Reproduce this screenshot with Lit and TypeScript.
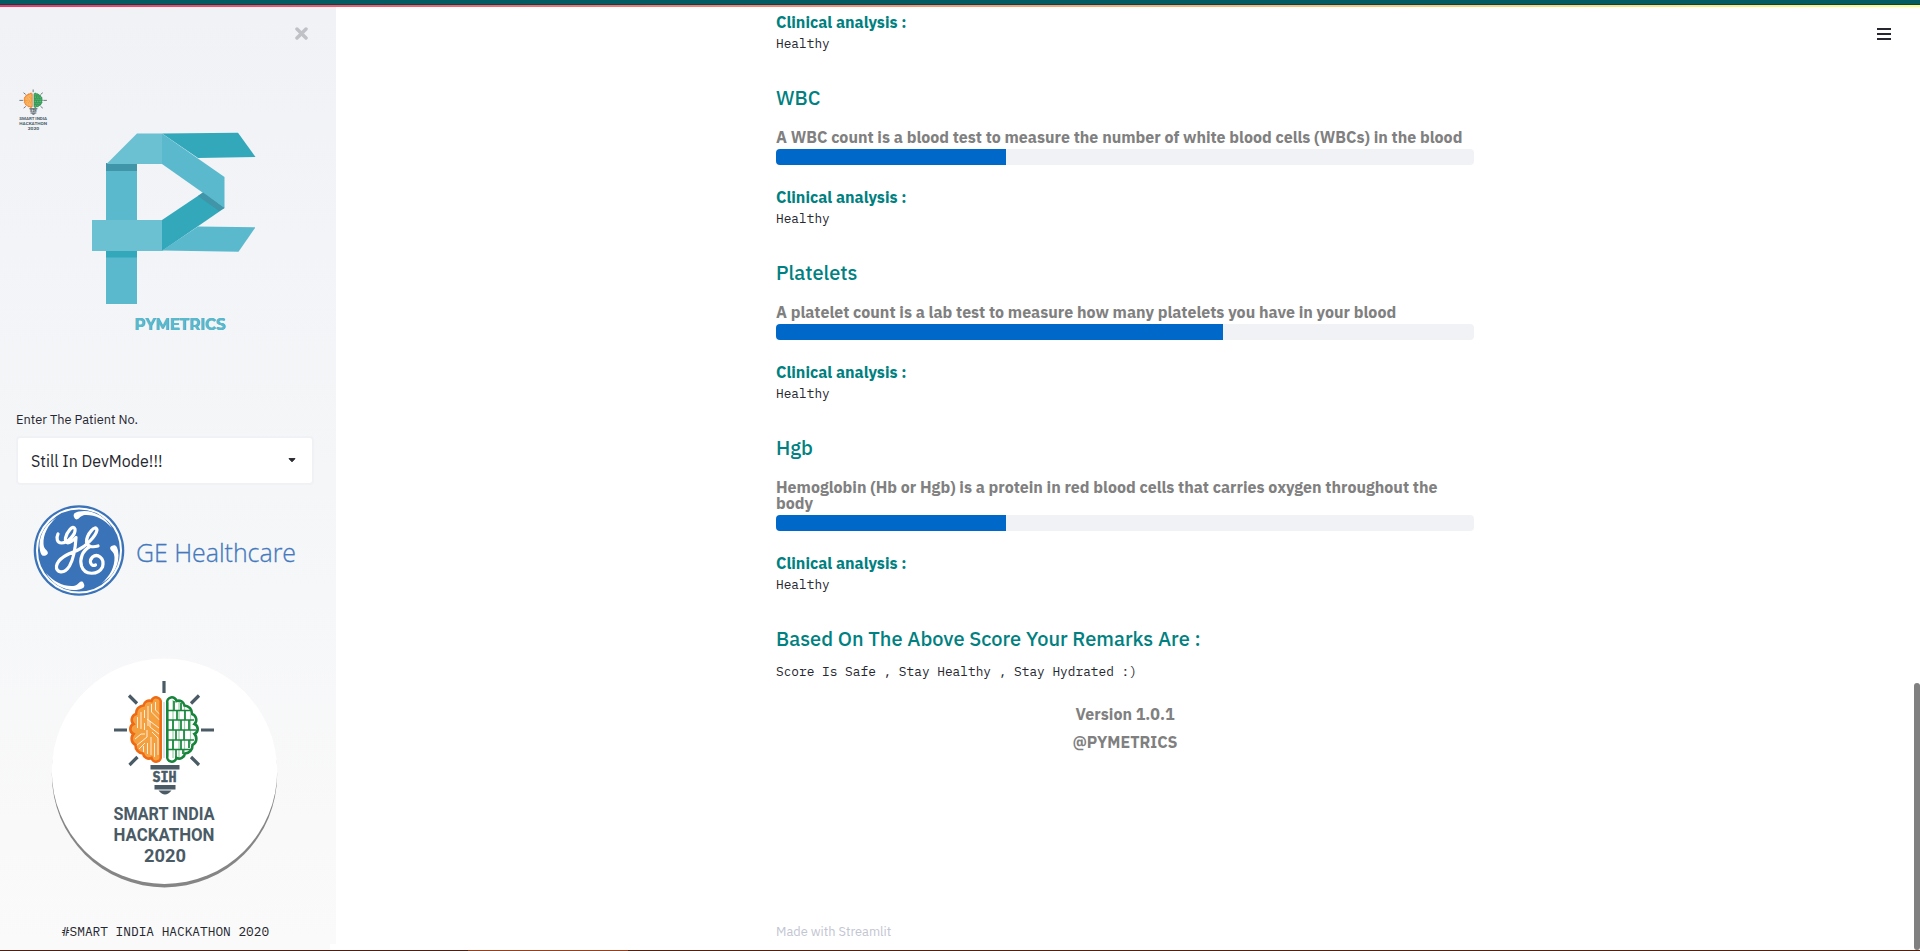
import { LitElement, html, svg, css } from "lit";
import { customElement } from "lit/decorators.js";

interface Metric { name: string; about: string; score: number; }

const METRICS: Metric[] = [
  { name: "WBC", about: "A WBC count is a blood test to measure the number of white blood cells (WBCs) in the blood", score: 33 },
  { name: "Platelets", about: "A platelet count is a lab test to measure how many platelets you have in your blood", score: 64 },
  { name: "Hgb", about: "Hemoglobin (Hb or Hgb) is a protein in red blood cells that carries oxygen throughout the body", score: 33 },
];

const LEFT_LOBE = "M130.700 63A4.700 4.700 0 0 0 121.500 61A6 6 0 0 0 113.500 65.500A8 8 0 0 0 106 74A6 6 0 0 0 103.500 84A5.500 5.500 0 0 0 103.500 94A7 7 0 0 0 105.500 105A8 8 0 0 0 113 113.500A6 6 0 0 0 121.500 118A4.700 4.700 0 0 0 130.700 116Z";
const RIGHT_LOBE = "M137.300 63A4.700 4.700 0 0 1 146.500 61A6 6 0 0 1 154.500 65.500A8 8 0 0 1 162 74A6 6 0 0 1 164.500 84A5.500 5.500 0 0 1 164.500 94A7 7 0 0 1 162.500 105A8 8 0 0 1 155 113.500A6 6 0 0 1 146.500 118A4.700 4.700 0 0 1 137.300 116Z";

/** Light bulb with a two-sided brain, rays, cap and caption. */
const bulb = (leafFill = "#fff") => svg`
  <path d="M134 41v12M99 55.500l8 8M169 55.500l-8 8M84 90h13M171 90h13M99.500 125l8 -8M169 125l-8 -8" fill="none" stroke="#4a5b66" stroke-width="3.200"/>
  <path d="M134 62v56" stroke="#d5dadd" stroke-width="1.500"/>
  <path d=${LEFT_LOBE} fill="#f5a03f"/>
  <path d="M107.500 77v11M111 72v17M114.500 70v8M118 66v20M121.500 64v8l8 8M125.500 62v8l5 5M129 88l-12 -9M129 94l-9 -7v-6M117 90v7l-11 9M122 92l6 6v17M124.500 103v14M121 97v18M117.500 103v11M113.500 106v7M114.500 83v7M105 99l6 -5h4M109 109l6 -6" stroke="#fff" stroke-width=".9" fill="none" opacity=".9"/>
  <path d=${LEFT_LOBE} fill="none" stroke="#ee6a14" stroke-width="2.600"/>
  <path d=${RIGHT_LOBE} fill=${leafFill}/>
  <path d="M143 60V118M149 62V117M154.500 66V112M160.500 75V104" fill="none" stroke="#9ccfa9" stroke-width="1.200"/>
  <path d="M137 70.500H161M137 80H164M137 90H166M137 100H164M137 109.500H161M144 61V70M151 63V70M147 70V80M155 70V80M143 80V90M151 80V90M159 80V90M146 90V100M154 90V100M143 100V110M151 100V110M159 100V108M146 110V118M153 110V114" fill="none" stroke="#16853b" stroke-width="1.700"/>
  <path d=${RIGHT_LOBE} fill="none" stroke="#16853b" stroke-width="2.600"/>
  <path d="M120.500 125h29v4.500h-29zM124.500 145h21v4.500h-21zM128.500 150.500h13q-6.500 8 -13 0z" fill="#4a5b66"/>
  <text x="122.500" y="142" font-size="15" font-weight="700" font-family="'IBM Plex Mono', 'Liberation Mono', monospace" fill="#4a5b66" stroke="#4a5b66" stroke-width=".5" textLength="24" lengthAdjust="spacingAndGlyphs">SIH</text>
  <g fill="#4a5b66" font-family="Roboto, sans-serif" font-weight="700" font-size="18.600">
    <text x="83.500" y="180.400" textLength="101" lengthAdjust="spacingAndGlyphs">SMART INDIA</text>
    <text x="83.500" y="200.600" textLength="101" lengthAdjust="spacingAndGlyphs">HACKATHON</text>
    <text x="114" y="221.500" textLength="42" lengthAdjust="spacingAndGlyphs">2020</text>
  </g>`;

/** One of the four crescents inside the round emblem, turned about its centre. */
const crescent = (angle: number) => svg`
  <path transform=${`rotate(${angle} 79 550.5)`} d="M74.500 518C72 513.500 75.500 512.300 79 511.500C92 509 105 516 112 528C104 519 95 514.800 86 515C82 515.200 81 516.500 79.500 517.800C77.500 519.800 75.500 520 74.500 518Z"/>`;

@customElement("app-root")
export class AppRoot extends LitElement {
  static styles = css`
    :host { display: flex; flex-direction: column; height: 951px; overflow: hidden; background: #fff; color: #262730; font-family: "IBM Plex Sans", Roboto, "Noto Sans", sans-serif; }
    .window-edge { height: 4px; background: #045b61; border-bottom: 1px solid #05454a; flex: none; }
    .decoration { height: 2px; background: linear-gradient(90deg, #f63366, #fffd80); flex: none; }
    .shell { flex: 1; display: grid; grid-template-columns: 336px 1fr 6px; min-height: 0; }
    .sidebar { background: linear-gradient(180deg, #f0f2f6, #fafafa); display: flex; flex-direction: column; overflow: hidden; min-height: 0; clip-path: polygon(0 0, 100% 0, 100% calc(100% - 6px), calc(100% - 6px) calc(100% - 6px), calc(100% - 6px) 100%, 0 100%); }
    .sidebar svg { display: block; flex: none; }
    .close { padding: 20px 0 0 294.500px; height: 13px; }
    .logo { margin-top: 40px; }
    .label { margin: 73px 0 0 16px; font-size: 12.800px; line-height: 20px; }
    .select { margin: 7px 23px 0 17px; height: 45px; border: 1px solid #eff1f5; box-shadow: 0 0 0 1px #f0f2f6; border-radius: 3px; background: #fff; display: flex; align-items: center; justify-content: space-between; padding: 0 16px 0 13px; font-size: 16px; }
    .ge { margin-top: 18px; }
    .badge { margin-top: 57px; }
    .tag { text-align: center; padding-right: 5px; margin-top: 34px; }
    .mono { font-family: "IBM Plex Mono", "Liberation Mono", monospace; font-size: 12.800px; line-height: 20px; white-space: pre; }
    .main { display: grid; grid-template-columns: 1fr 698px 1fr; min-height: 0; }
    .column { grid-column: 2; display: flex; flex-direction: column; padding-top: 7px; }
    .menu { grid-column: 3; justify-self: end; padding: 21px 23px 0 0; }
    .menu svg { display: block; }
    .metric { display: flex; flex-direction: column; margin-top: 32px; }
    .heading { font-size: 20px; line-height: 24px; font-weight: 500; color: #008080; }
    .bold { font-size: 16px; line-height: 16px; font-weight: 700; }
    .about { color: gray; margin-top: 19px; }
    .track { height: 16px; margin-top: 4px; border-radius: 4px; background: #f0f2f6; overflow: hidden; }
    .fill { height: 100%; background: #0068c9; }
    .clinical { color: #008080; }
    .metric .clinical { margin-top: 24px; }
    .result { margin-top: 4px; }
    .remarks { margin-top: 32px; }
    .score { margin-top: 11px; }
    .version { color: gray; text-align: center; margin-top: 24px; }
    .brand { color: gray; text-align: center; margin-top: 12px; }
    .made { margin-top: 172px; font-size: 12.800px; line-height: 20px; color: #c3c5d2; }
    .scroll { padding-top: 676px; }
    .thumb { height: 267px; border-radius: 3px; background: #808080; }
    .taskbar { height: 1px; flex: none; background: linear-gradient(90deg, #4a1f14 0 468px, #93401f 468px 628px, #53200f 628px); }
  `;

  private clinical() {
    return html`<div class="bold clinical">Clinical analysis :</div><div class="mono result">Healthy</div>`;
  }

  private pymetrics() {
    return svg`<svg width="336" height="257" viewBox="0 80 336 257">
      <g transform="translate(-3.700 80.400) scale(.275 .222)">${bulb("#4fae6a")}</g>
      <path d="M106 163h31v141h-31z" fill="#5bb9ce"/>
      <path d="M106 163h31v8h-31z" fill="#4095a8"/>
      <path d="M92 220h70v31H92z" fill="#6bc0d2"/>
      <path d="M106 251h31v6.500h-31z" fill="#32a8ba"/>
      <path d="M137 133.500h25V164h-55.500z" fill="#6bc0d2"/>
      <path d="M162 133.500l76 -.8L255.500 157 198 158z" fill="#32a8ba"/>
      <path d="M162 133.500L224.500 177v31L162 164z" fill="#5bb9ce"/>
      <path d="M203 192.500L224.500 208 162 251v-31z" fill="#32a8ba"/>
      <path d="M203 192.500L224.500 208l-5.500 3L198 196z" fill="#4095a8"/>
      <path d="M198 226.500l57.500 .8L238.500 251.700 162 250.500z" fill="#5bb9ce"/>
      <g font-family="Montserrat, Inter, sans-serif" font-weight="700" font-size="16">
        <text x="134.800" y="330.300" fill="#3d9db2" textLength="91" lengthAdjust="spacingAndGlyphs">PYMETRICS</text>
        <text x="134.300" y="329.700" fill="#5bb9ce" textLength="91" lengthAdjust="spacingAndGlyphs">PYMETRICS</text>
      </g>
    </svg>`;
  }

  private geLogo() {
    return svg`<svg class="ge" width="336" height="96" viewBox="0 502 336 96">
      <circle cx="79" cy="550.500" r="45.300" fill="#3b73b9"/>
      <circle cx="79" cy="550.500" r="42" fill="none" stroke="#fff" stroke-width="2"/>
      <g fill="#fff">${[0, 90, 180, 270].map(crescent)}</g>
      <g fill="none" stroke="#fff" stroke-width="3.200" stroke-linecap="round" stroke-linejoin="round">
        <path d="M58 534C56 538 57 543 61.500 543C68 543 76 534 75 529C73 524 67 532 65.500 538C64.500 544 69 545 76 537.500C75.500 547 74 558 69.500 566C64 575 55.500 572.500 56.500 566C58 558 68 554 77 550.500C86 546.500 96 536 97 530C96 523.500 86.500 534 86.500 542C87 547 93 547.500 98 546"/>
        <path d="M90 546.500C82 551 79.500 559 81.500 566C84.500 575.500 98 575.500 102.500 567C105 557 97 553.500 92.500 557C88.500 561 91 567 95.500 565"/>
      </g>
      <text x="136" y="562" font-family="'Open Sans', sans-serif" font-weight="300" font-size="25.500" fill="#4479bd" stroke="#4479bd" stroke-width=".3" textLength="160" lengthAdjust="spacingAndGlyphs">GE Healthcare</text>
    </svg>`;
  }

  private sihBadge() {
    return svg`<svg class="badge" width="336" height="233" viewBox="-30 15 336 233">
      <circle cx="134.500" cy="134.800" r="112.600" fill="#858585"/>
      <circle cx="134.500" cy="131.200" r="112.700" fill="#fff"/>
      ${bulb()}
    </svg>`;
  }

  render() {
    return html`
      <div class="window-edge"></div>
      <div class="decoration"></div>
      <div class="shell">
        <aside class="sidebar">
          <div class="close"><svg width="13" height="13" viewBox="0 0 13 13"><path d="M2 2l9 9M11 2l-9 9" stroke="#c0c1c7" stroke-width="3.500" stroke-linecap="round"/></svg></div>
          <div class="logo">${this.pymetrics()}</div>
          <div class="label">Enter The Patient No.</div>
          <div class="select"><span>Still In DevMode!!!</span><svg width="8" height="5" viewBox="0 0 8 5"><path d="M1 .6h6L4 3.800z" fill="#262730" stroke="#262730" stroke-linejoin="round"/></svg></div>
          ${this.geLogo()}
          ${this.sihBadge()}
          <div class="mono tag">#SMART INDIA HACKATHON 2020</div>
        </aside>
        <main class="main">
          <div class="column">
            ${this.clinical()}
            ${METRICS.map((m) => html`
              <section class="metric">
                <div class="heading">${m.name}</div>
                <div class="bold about">${m.about}</div>
                <div class="track"><div class="fill" style="width:${m.score}%"></div></div>
                ${this.clinical()}
              </section>`)}
            <div class="heading remarks">Based On The Above Score Your Remarks Are :</div>
            <div class="mono score">Score Is Safe , Stay Healthy , Stay Hydrated :)</div>
            <div class="bold version">Version 1.0.1</div>
            <div class="bold brand">@PYMETRICS</div>
            <div class="made">Made with Streamlit</div>
          </div>
          <div class="menu"><svg width="14" height="14" viewBox="0 0 14 14"><path d="M0 1h14M0 6h14M0 11h14" stroke="#262730" stroke-width="1.800"/></svg></div>
        </main>
        <div class="scroll"><div class="thumb"></div></div>
      </div>
      <div class="taskbar"></div>`;
  }
}
